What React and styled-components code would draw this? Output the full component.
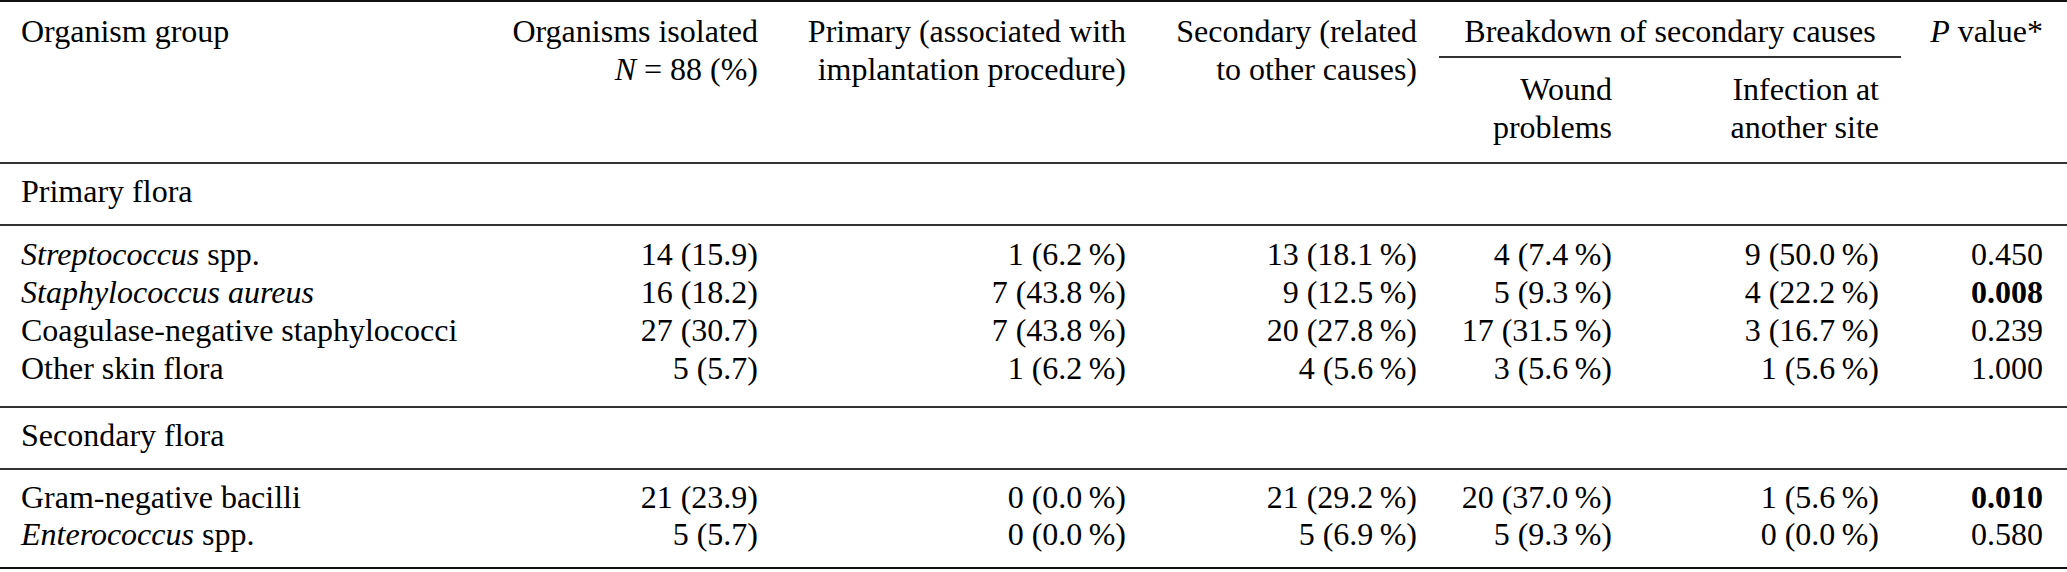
import React from "react";
import styled, { createGlobalStyle } from "styled-components";

const GlobalStyle = createGlobalStyle`
  html, body {
    margin: 0;
    padding: 0;
    background: #ffffff;
  }
  body {
    font-family: "Liberation Serif", "Times New Roman", serif;
    color: #000;
  }
`;

const Table = styled.table`
  width: 2067px;
  table-layout: fixed;
  border-collapse: collapse;
  font-family: "Liberation Serif", "Times New Roman", serif;
  font-size: 32px;
  line-height: 38px;
  color: #000;
  border-top: 2px solid #111;
  border-bottom: 2px solid #111;
`;

const Head = styled.thead`
  border-bottom: 2px solid #333;
`;

const HeadCell = styled.th`
  font-weight: normal;
  white-space: nowrap;
  vertical-align: top;
  text-align: ${(p) => p.$align || "right"};
  padding: ${(p) => p.$pad || "10px 22px 0 22px"};
  ${(p) => (p.$rule ? "border-bottom: 2px solid #333;" : "")}
`;

const SectionBody = styled.tbody`
  border-bottom: 2px solid #333;
`;

const SectionCell = styled.td`
  text-align: left;
  padding: 8px 22px 14px 21px;
  white-space: nowrap;
`;

const DataBody = styled.tbody`
  line-height: ${(p) => p.$pitch}px;
  ${(p) => (p.$rule ? "border-bottom: 2px solid #333;" : "")}
  tr:first-child td {
    padding-top: ${(p) => p.$top}px;
  }
  tr:last-child td {
    padding-bottom: ${(p) => p.$bottom}px;
  }
`;

const Cell = styled.td`
  white-space: nowrap;
  padding: 0 ${(p) => (p.$last ? 24 : 22)}px 0 ${(p) => (p.$first ? 21 : 22)}px;
  text-align: ${(p) => (p.$first ? "left" : "right")};
  font-weight: ${(p) => (p.$bold ? "bold" : "normal")};
`;

const Em = styled.i`
  font-style: italic;
`;

const widths = [480, 300, 368, 291, 195, 267, 166];

const TS = "\u2009";

const primary = [
  [<><Em>Streptococcus</Em> spp.</>, "14 (15.9)", `1 (6.2${TS}%)`, `13 (18.1${TS}%)`, `4 (7.4${TS}%)`, `9 (50.0${TS}%)`, "0.450", false],
  [<Em>Staphylococcus aureus</Em>, "16 (18.2)", `7 (43.8${TS}%)`, `9 (12.5${TS}%)`, `5 (9.3${TS}%)`, `4 (22.2${TS}%)`, "0.008", true],
  ["Coagulase-negative staphylococci", "27 (30.7)", `7 (43.8${TS}%)`, `20 (27.8${TS}%)`, `17 (31.5${TS}%)`, `3 (16.7${TS}%)`, "0.239", false],
  ["Other skin flora", "5 (5.7)", `1 (6.2${TS}%)`, `4 (5.6${TS}%)`, `3 (5.6${TS}%)`, `1 (5.6${TS}%)`, "1.000", false],
];

const secondary = [
  ["Gram-negative bacilli", "21 (23.9)", `0 (0.0${TS}%)`, `21 (29.2${TS}%)`, `20 (37.0${TS}%)`, `1 (5.6${TS}%)`, "0.010", true],
  [<><Em>Enterococcus</Em> spp.</>, "5 (5.7)", `0 (0.0${TS}%)`, `5 (6.9${TS}%)`, `5 (9.3${TS}%)`, `0 (0.0${TS}%)`, "0.580", false],
];

function DataRow({ row }) {
  const bold = row[7];
  return (
    <tr>
      {row.slice(0, 7).map((v, i) => (
        <Cell key={i} $first={i === 0} $last={i === 6} $bold={i === 6 && bold}>
          {v}
        </Cell>
      ))}
    </tr>
  );
}

export default function App() {
  return (
    <>
      <GlobalStyle />
      <Table>
        <colgroup>
          {widths.map((w, i) => (
            <col key={i} style={{ width: w }} />
          ))}
        </colgroup>
        <Head>
          <tr>
            <HeadCell rowSpan={2} $align="left" $pad="10px 22px 0 21px">
              Organism group
            </HeadCell>
            <HeadCell rowSpan={2}>
              Organisms isolated
              <br />
              <Em>N</Em> = 88 (%)
            </HeadCell>
            <HeadCell rowSpan={2}>
              Primary (associated with
              <br />
              implantation procedure)
            </HeadCell>
            <HeadCell rowSpan={2}>
              Secondary (related
              <br />
              to other causes)
            </HeadCell>
            <HeadCell colSpan={2} $align="center" $pad="10px 22px 6px 22px" $rule>
              Breakdown of secondary causes
            </HeadCell>
            <HeadCell rowSpan={2} $pad="10px 24px 0 22px">
              <Em>P</Em> value*
            </HeadCell>
          </tr>
          <tr>
            <HeadCell $pad="12px 22px 16px 22px">
              Wound
              <br />
              problems
            </HeadCell>
            <HeadCell $pad="12px 22px 16px 22px">
              Infection at
              <br />
              another site
            </HeadCell>
          </tr>
        </Head>
        <SectionBody>
          <tr>
            <SectionCell colSpan={7}>Primary flora</SectionCell>
          </tr>
        </SectionBody>
        <DataBody $pitch={38} $top={9} $bottom={19} $rule>
          {primary.map((r, i) => (
            <DataRow key={i} row={r} />
          ))}
        </DataBody>
        <SectionBody>
          <tr>
            <SectionCell colSpan={7}>Secondary flora</SectionCell>
          </tr>
        </SectionBody>
        <DataBody $pitch={37} $top={9} $bottom={14}>
          {secondary.map((r, i) => (
            <DataRow key={i} row={r} />
          ))}
        </DataBody>
      </Table>
    </>
  );
}
